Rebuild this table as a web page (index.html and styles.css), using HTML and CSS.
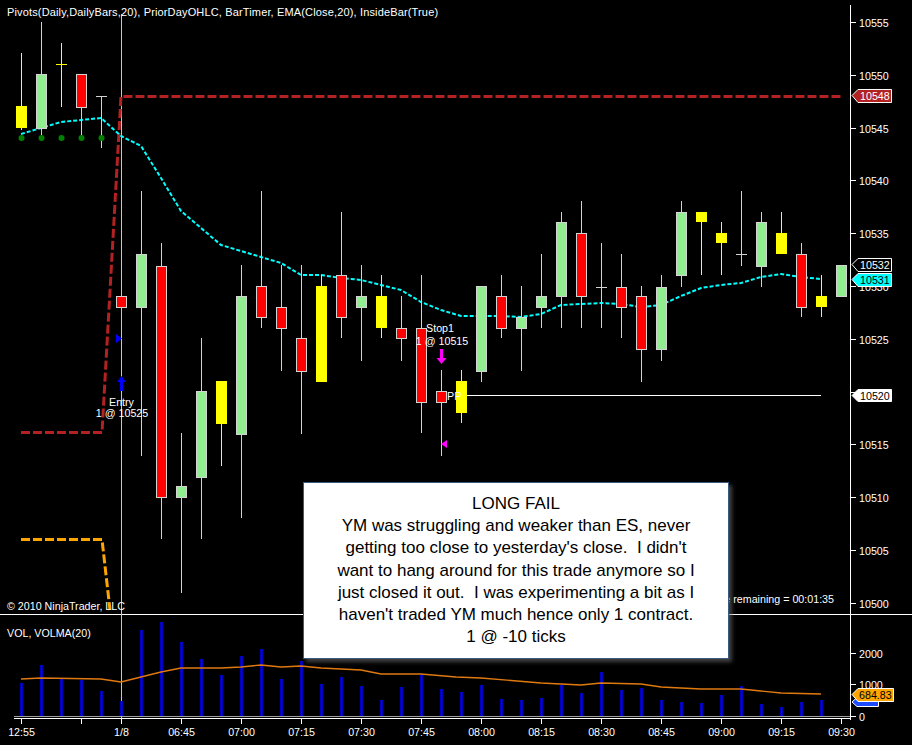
FILE: index.html
```html
<!DOCTYPE html>
<html>
<head>
<meta charset="utf-8">
<title>YM chart</title>
<link rel="stylesheet" href="styles.css">
</head>
<body>
<div class="chart">
<svg class="plot" width="912" height="745" viewBox="0 0 912 745" xmlns="http://www.w3.org/2000/svg">
  <!-- frame lines -->
  <g class="frame" shape-rendering="crispEdges">
    <line x1="850.5" y1="5" x2="850.5" y2="720"/>
    <line x1="0" y1="614.5" x2="912" y2="614.5"/>
    <line class="axg" x1="14" y1="716.5" x2="850" y2="716.5"/>
    <line x1="14" y1="718.5" x2="850" y2="718.5"/>
    <line class="sess" x1="121.5" y1="14" x2="121.5" y2="718"/>
  </g>

  <!-- price axis ticks and labels -->
  <g class="ticks" shape-rendering="crispEdges">
    <line x1="850" y1="22.5" x2="856" y2="22.5"/>
    <line x1="850" y1="75.5" x2="856" y2="75.5"/>
    <line x1="850" y1="128.5" x2="856" y2="128.5"/>
    <line x1="850" y1="180.5" x2="856" y2="180.5"/>
    <line x1="850" y1="233.5" x2="856" y2="233.5"/>
    <line x1="850" y1="286.5" x2="856" y2="286.5"/>
    <line x1="850" y1="339.5" x2="856" y2="339.5"/>
    <line x1="850" y1="392.5" x2="856" y2="392.5"/>
    <line x1="850" y1="444.5" x2="856" y2="444.5"/>
    <line x1="850" y1="497.5" x2="856" y2="497.5"/>
    <line x1="850" y1="550.5" x2="856" y2="550.5"/>
    <line x1="850" y1="603.5" x2="856" y2="603.5"/>
    <line x1="850" y1="653.5" x2="856" y2="653.5"/>
    <line x1="850" y1="684.5" x2="856" y2="684.5"/>
    <line x1="850" y1="716.5" x2="856" y2="716.5"/>
    <line x1="21.5" y1="718" x2="21.5" y2="724"/>
    <line x1="81.5" y1="718" x2="81.5" y2="724"/>
    <line x1="121.5" y1="718" x2="121.5" y2="724"/>
    <line x1="181.5" y1="718" x2="181.5" y2="724"/>
    <line x1="241.5" y1="718" x2="241.5" y2="724"/>
    <line x1="301.5" y1="718" x2="301.5" y2="724"/>
    <line x1="361.5" y1="718" x2="361.5" y2="724"/>
    <line x1="421.5" y1="718" x2="421.5" y2="724"/>
    <line x1="481.5" y1="718" x2="481.5" y2="724"/>
    <line x1="541.5" y1="718" x2="541.5" y2="724"/>
    <line x1="601.5" y1="718" x2="601.5" y2="724"/>
    <line x1="661.5" y1="718" x2="661.5" y2="724"/>
    <line x1="721.5" y1="718" x2="721.5" y2="724"/>
    <line x1="781.5" y1="718" x2="781.5" y2="724"/>
    <line x1="841.5" y1="718" x2="841.5" y2="724"/>
  </g>
  <g class="lbl">
    <text x="859" y="26.5">10555</text>
    <text x="859" y="79.5">10550</text>
    <text x="859" y="132.5">10545</text>
    <text x="859" y="184.5">10540</text>
    <text x="859" y="237.5">10535</text>
    <text x="859" y="290.5">10530</text>
    <text x="859" y="343.5">10525</text>
    <text x="859" y="448.5">10515</text>
    <text x="859" y="501.5">10510</text>
    <text x="859" y="554.5">10505</text>
    <text x="859" y="607.5">10500</text>
    <text x="859" y="657.5">2000</text>
    <text x="859" y="688.5">1000</text>
    <text x="859" y="720.5">0</text>
  </g>
  <g class="lbl mid">
    <text x="21.5" y="736">12:55</text>
    <text x="121.5" y="736">1/8</text>
    <text x="181.5" y="736">06:45</text>
    <text x="241.5" y="736">07:00</text>
    <text x="301.5" y="736">07:15</text>
    <text x="361.5" y="736">07:30</text>
    <text x="421.5" y="736">07:45</text>
    <text x="481.5" y="736">08:00</text>
    <text x="541.5" y="736">08:15</text>
    <text x="601.5" y="736">08:30</text>
    <text x="661.5" y="736">08:45</text>
    <text x="721.5" y="736">09:00</text>
    <text x="781.5" y="736">09:15</text>
    <text x="841.5" y="736">09:30</text>
  </g>

  <!-- pivot lines -->
  <path class="pivr" d="M21 432.5 H102 L121 96.5 H842"/>
  <path class="pivo" d="M21 539.5 H102 L110 610"/>
  <!-- EMA -->
  <path class="ema" d="M21 134 L41 128 L61 122 L81 120 L101 118 L121 136 L141 146 L161 178 L181 211 L201 228 L221 245 L241 251 L261 257 L281 263 L301 275 L321 275 L341 278 L361 280 L381 285 L401 290 L421 302 L441 310 L461 316 L481 316 L501 316 L521 317 L541 314 L561 305 L581 304 L601 303 L621 304 L641 307 L661 305 L681 296 L701 288 L721 285 L741 283 L761 277 L781 274 L801 277 L821 279"/>

  <!-- PP line -->
  <line class="pp" x1="461" y1="395.5" x2="821" y2="395.5" shape-rendering="crispEdges"/>

  <!-- candles -->
  <g class="candles" shape-rendering="crispEdges">
    <line class="wy" x1="21.5" y1="53" x2="21.5" y2="130"/><rect class="ib" x="16" y="106" width="11" height="22"/>
    <line class="wk" x1="41.5" y1="22" x2="41.5" y2="135"/><rect class="up" x="36.5" y="74.5" width="10" height="54"/>
    <line class="wy" x1="61.5" y1="43" x2="61.5" y2="107"/><line class="wy" x1="56" y1="64.5" x2="67" y2="64.5"/>
    <line class="wk" x1="81.5" y1="107" x2="81.5" y2="138"/><rect class="dn" x="76.5" y="74.5" width="10" height="33"/>
    <line class="wk" x1="101.5" y1="96" x2="101.5" y2="148"/><line class="wk" x1="96" y1="96.5" x2="107" y2="96.5"/>
    <rect class="dn" x="116.5" y="296.5" width="10" height="11"/>
    <line class="wk" x1="141.5" y1="191" x2="141.5" y2="456"/><rect class="up" x="136.5" y="254.5" width="10" height="53"/>
    <line class="wk" x1="161.5" y1="243" x2="161.5" y2="539"/><rect class="dn" x="156.5" y="266.5" width="10" height="231"/>
    <line class="wk" x1="181.5" y1="433" x2="181.5" y2="593"/><rect class="up" x="176.5" y="486.5" width="10" height="11"/>
    <line class="wk" x1="201.5" y1="338" x2="201.5" y2="539"/><rect class="up" x="196.5" y="391.5" width="10" height="86"/>
    <line class="wy" x1="221.5" y1="381" x2="221.5" y2="466"/><rect class="ib" x="216" y="381" width="11" height="43"/>
    <line class="wk" x1="241.5" y1="265" x2="241.5" y2="518"/><rect class="up" x="236.5" y="296.5" width="10" height="138"/>
    <line class="wk" x1="261.5" y1="191" x2="261.5" y2="328"/><rect class="dn" x="256.5" y="286.5" width="10" height="31"/>
    <line class="wk" x1="281.5" y1="265" x2="281.5" y2="371"/><rect class="dn" x="276.5" y="307.5" width="10" height="21"/>
    <line class="wk" x1="301.5" y1="265" x2="301.5" y2="434"/><rect class="dn" x="296.5" y="338.5" width="10" height="33"/>
    <line class="wy" x1="321.5" y1="275" x2="321.5" y2="382"/><rect class="ib" x="316" y="286" width="11" height="96"/>
    <line class="wk" x1="341.5" y1="212" x2="341.5" y2="338"/><rect class="dn" x="336.5" y="275.5" width="10" height="42"/>
    <line class="wk" x1="361.5" y1="265" x2="361.5" y2="361"/><rect class="up" x="356.5" y="296.5" width="10" height="11"/>
    <line class="wy" x1="381.5" y1="275" x2="381.5" y2="338"/><rect class="ib" x="376" y="296" width="11" height="32"/>
    <line class="wk" x1="401.5" y1="296" x2="401.5" y2="361"/><rect class="dn" x="396.5" y="328.5" width="10" height="10"/>
    <line class="wk" x1="421.5" y1="275" x2="421.5" y2="433"/><rect class="dn" x="416.5" y="328.5" width="10" height="74"/>
    <line class="wk" x1="441.5" y1="370" x2="441.5" y2="456"/><rect class="dn" x="436.5" y="391.5" width="10" height="11"/>
    <line class="wy" x1="461.5" y1="370" x2="461.5" y2="423"/><rect class="ib" x="456" y="381" width="11" height="32"/>
    <line class="wk" x1="481.5" y1="286" x2="481.5" y2="382"/><rect class="up" x="476.5" y="286.5" width="10" height="85"/>
    <line class="wk" x1="501.5" y1="275" x2="501.5" y2="338"/><rect class="dn" x="496.5" y="296.5" width="10" height="32"/>
    <line class="wk" x1="521.5" y1="286" x2="521.5" y2="371"/><rect class="up" x="516.5" y="317.5" width="10" height="11"/>
    <line class="wk" x1="541.5" y1="254" x2="541.5" y2="328"/><rect class="up" x="536.5" y="296.5" width="10" height="11"/>
    <line class="wk" x1="561.5" y1="212" x2="561.5" y2="328"/><rect class="up" x="556.5" y="222.5" width="10" height="74"/>
    <line class="wk" x1="581.5" y1="201" x2="581.5" y2="328"/><rect class="dn" x="576.5" y="233.5" width="10" height="63"/>
    <line class="wk" x1="601.5" y1="243" x2="601.5" y2="328"/><line class="wk" x1="596" y1="287.5" x2="607" y2="287.5"/>
    <line class="wk" x1="621.5" y1="254" x2="621.5" y2="338"/><rect class="dn" x="616.5" y="287.5" width="10" height="20"/>
    <line class="wk" x1="641.5" y1="286" x2="641.5" y2="382"/><rect class="dn" x="636.5" y="296.5" width="10" height="53"/>
    <line class="wk" x1="661.5" y1="275" x2="661.5" y2="361"/><rect class="up" x="656.5" y="287.5" width="10" height="62"/>
    <line class="wk" x1="681.5" y1="201" x2="681.5" y2="287"/><rect class="up" x="676.5" y="212.5" width="10" height="63"/>
    <line class="wy" x1="701.5" y1="212" x2="701.5" y2="275"/><rect class="ib" x="696" y="212" width="11" height="10"/>
    <line class="wy" x1="721.5" y1="222" x2="721.5" y2="275"/><rect class="ib" x="716" y="233" width="11" height="10"/>
    <line class="wk" x1="741.5" y1="191" x2="741.5" y2="266"/><line class="wk" x1="736" y1="254.5" x2="747" y2="254.5"/>
    <line class="wk" x1="761.5" y1="212" x2="761.5" y2="287"/><rect class="up" x="756.5" y="222.5" width="10" height="44"/>
    <line class="wy" x1="781.5" y1="212" x2="781.5" y2="254"/><rect class="ib" x="776" y="233" width="11" height="21"/>
    <line class="wk" x1="801.5" y1="243" x2="801.5" y2="317"/><rect class="dn" x="796.5" y="254.5" width="10" height="53"/>
    <line class="wy" x1="821.5" y1="275" x2="821.5" y2="317"/><rect class="ib" x="816" y="296" width="11" height="11"/>
    <rect class="up" x="836.5" y="265.5" width="10" height="31"/>
  </g>

  <!-- pivot dots -->
  <g class="dots">
    <circle cx="21.5" cy="138" r="3"/>
    <circle cx="41.5" cy="138" r="3"/>
    <circle cx="61.5" cy="138" r="3"/>
    <circle cx="81.5" cy="138" r="3"/>
    <circle cx="101.5" cy="138" r="3"/>
  </g>

  <!-- execution markers -->
  <path class="blue" d="M116 334 L122 338.5 L116 343 Z"/>
  <path class="blue" d="M121.5 376 L126 382 L123 382 L123 391 L120 391 L120 382 L117 382 Z"/>
  <path class="mag" d="M440 349 L443 349 L443 358 L446.5 358 L441.5 364 L436.5 358 L440 358 Z"/>
  <path class="mag" d="M441 444 L447 440 L447 448 Z"/>

  <!-- volume -->
  <g class="vol">
    <line x1="21.5" y1="716" x2="21.5" y2="683"/>
    <line x1="41.5" y1="716" x2="41.5" y2="665"/>
    <line x1="61.5" y1="716" x2="61.5" y2="679"/>
    <line x1="81.5" y1="716" x2="81.5" y2="680"/>
    <line x1="101.5" y1="716" x2="101.5" y2="691"/>
    <line x1="121.5" y1="716" x2="121.5" y2="701"/>
    <line x1="141.5" y1="716" x2="141.5" y2="630"/>
    <line x1="161.5" y1="716" x2="161.5" y2="622"/>
    <line x1="181.5" y1="716" x2="181.5" y2="642"/>
    <line x1="201.5" y1="716" x2="201.5" y2="659"/>
    <line x1="221.5" y1="716" x2="221.5" y2="675"/>
    <line x1="241.5" y1="716" x2="241.5" y2="656"/>
    <line x1="261.5" y1="716" x2="261.5" y2="649"/>
    <line x1="281.5" y1="716" x2="281.5" y2="679"/>
    <line x1="301.5" y1="716" x2="301.5" y2="661"/>
    <line x1="321.5" y1="716" x2="321.5" y2="684"/>
    <line x1="341.5" y1="716" x2="341.5" y2="677"/>
    <line x1="361.5" y1="716" x2="361.5" y2="686"/>
    <line x1="381.5" y1="716" x2="381.5" y2="700"/>
    <line x1="401.5" y1="716" x2="401.5" y2="687"/>
    <line x1="421.5" y1="716" x2="421.5" y2="675"/>
    <line x1="441.5" y1="716" x2="441.5" y2="689"/>
    <line x1="461.5" y1="716" x2="461.5" y2="692"/>
    <line x1="481.5" y1="716" x2="481.5" y2="685"/>
    <line x1="501.5" y1="716" x2="501.5" y2="699"/>
    <line x1="521.5" y1="716" x2="521.5" y2="700"/>
    <line x1="541.5" y1="716" x2="541.5" y2="698"/>
    <line x1="561.5" y1="716" x2="561.5" y2="685"/>
    <line x1="581.5" y1="716" x2="581.5" y2="693"/>
    <line x1="601.5" y1="716" x2="601.5" y2="672"/>
    <line x1="621.5" y1="716" x2="621.5" y2="690"/>
    <line x1="641.5" y1="716" x2="641.5" y2="688"/>
    <line x1="661.5" y1="716" x2="661.5" y2="700"/>
    <line x1="681.5" y1="716" x2="681.5" y2="702"/>
    <line x1="701.5" y1="716" x2="701.5" y2="703"/>
    <line x1="721.5" y1="716" x2="721.5" y2="695"/>
    <line x1="741.5" y1="716" x2="741.5" y2="686"/>
    <line x1="761.5" y1="716" x2="761.5" y2="704"/>
    <line x1="781.5" y1="716" x2="781.5" y2="707"/>
    <line x1="801.5" y1="716" x2="801.5" y2="702"/>
    <line x1="821.5" y1="716" x2="821.5" y2="700"/>
  </g>
  <path class="volma" d="M21 679 L41 678 L101 679 L121 682 L161 672 L181 668 L221 668 L241 667 L261 665 L281 667 L301 666 L321 668 L361 670 L381 674 L421 674 L456 677 L481 678 L541 683 L581 685 L601 683 L641 684 L661 687 L701 689 L741 689 L761 691 L781 693 L821 694"/>

  <!-- chart texts -->
  <g class="lbl">
    <text class="title" x="7" y="16">Pivots(Daily,DailyBars,20), PriorDayOHLC, BarTimer, EMA(Close,20), InsideBar(True)</text>
    <text x="7" y="610">© 2010 NinjaTrader, LLC</text>
    <text x="7" y="637">VOL, VOLMA(20)</text>
    <text x="834" y="603" text-anchor="end">Time remaining = 00:01:35</text>
    <text x="447" y="399.5">PP</text>
  </g>
  <g class="lbl mid">
    <text x="121.5" y="406">Entry</text>
    <text x="122" y="417">1 @ 10525</text>
    <text x="440" y="332">Stop1</text>
    <text x="442" y="345">1 @ 10515</text>
  </g>

  <!-- right-side value flags -->
  <g class="flags">
    <path class="f-red" d="M852 95.5 L858 89.5 L891.5 89.5 L891.5 102.5 L858 102.5 Z"/>
    <text class="t-w" x="860" y="100">10548</text>
    <path class="f-blk" d="M852 264.5 L858 258.5 L891.5 258.5 L891.5 271.5 L858 271.5 Z"/>
    <text class="t-w" x="860" y="269">10532</text>
    <path class="f-cy" d="M852 279.5 L858 273.5 L891.5 273.5 L891.5 286.5 L858 286.5 Z"/>
    <text class="t-b" x="860" y="284">10531</text>
    <path class="f-wh" d="M852 395.5 L858 389.5 L891.5 389.5 L891.5 401.5 L858 401.5 Z"/>
    <text class="t-b" x="860" y="400">10520</text>
    <path class="f-bl" d="M852 702 L857 697.5 L878.5 697.5 L878.5 706.5 L857 706.5 Z"/>
    <path class="f-or" d="M852 694.5 L858 688.5 L893.5 688.5 L893.5 701.5 L858 701.5 Z"/>
    <text class="t-b" x="859" y="699">684.83</text>
  </g>
</svg>

<div class="note">
  <p class="note-title">LONG FAIL</p>
  <p class="note-body">YM was struggling and weaker than ES, never<br>getting too close to yesterday's close.&nbsp; I didn't<br>want to hang around for this trade anymore so I<br>just closed it out.&nbsp; I was experimenting a bit as I<br>haven't traded YM much hence only 1 contract.<br>1 @ -10 ticks</p>
</div>
</div>
</body>
</html>
```

FILE: styles.css
```css
html, body {
  margin: 0;
  padding: 0;
  background: #000;
}

.chart {
  position: relative;
  width: 912px;
  height: 745px;
  overflow: hidden;
  background: #000;
}

.plot {
  display: block;
}

.frame line { stroke: #ffffff; stroke-width: 1; }
.frame .axg { stroke: #a0a0a0; }
.frame .sess { stroke: #c8c8c8; }

.ticks line { stroke: #ffffff; stroke-width: 1; }

.lbl text {
  font-family: "Liberation Sans", Arial, sans-serif;
  font-size: 10.7px;
  fill: #ffffff;
}
.lbl .title { font-size: 11px; letter-spacing: 0.15px; }
.lbl.mid text { text-anchor: middle; }

.pivr {
  fill: none;
  stroke: #b22222;
  stroke-width: 3;
  stroke-dasharray: 9 3;
}
.pivo {
  fill: none;
  stroke: #ffa500;
  stroke-width: 3;
  stroke-dasharray: 9 3;
}
.ema {
  fill: none;
  stroke: #00ffff;
  stroke-width: 2;
  stroke-dasharray: 4 2;
}
.pp { stroke: #ffffff; stroke-width: 1; }

.candles .wk { stroke: #d3d3d3; stroke-width: 1; }
.candles .wy { stroke: #ffff00; stroke-width: 1; }
.candles .up { fill: #90ee90; stroke: #d3d3d3; stroke-width: 1; }
.candles .dn { fill: #ff0000; stroke: #d3d3d3; stroke-width: 1; }
.candles .ib { fill: #ffff00; stroke: none; }

.dots circle { fill: #008000; }

.blue { fill: #0000ff; }
.mag { fill: #ff00ff; }

.vol line { stroke: #0000ff; stroke-width: 2.5; }
.volma {
  fill: none;
  stroke: #e07a10;
  stroke-width: 1.3;
}

.flags path { stroke: #ffffff; stroke-width: 1; }
.flags .f-red { fill: #b22222; }
.flags .f-blk { fill: #000000; }
.flags .f-cy { fill: #00ffff; }
.flags .f-wh { fill: #ffffff; }
.flags .f-or { fill: #ffa500; }
.flags .f-bl { fill: #1e4bff; }
.flags text {
  font-family: "Liberation Sans", Arial, sans-serif;
  font-size: 10.7px;
}
.flags .t-w { fill: #ffffff; }
.flags .t-b { fill: #000000; }

.note {
  position: absolute;
  left: 303px;
  top: 482px;
  width: 426px;
  height: 177px;
  box-sizing: border-box;
  background: #ffffff;
  border: 1px solid #3a5a80;
  box-shadow: 3px 3px 4px rgba(110, 110, 110, 0.6);
  padding-top: 10px;
  font-family: "Liberation Sans", Arial, sans-serif;
  font-size: 17px;
  line-height: 22.2px;
  color: #000;
  text-align: center;
}
.note p {
  margin: 0;
}
```
